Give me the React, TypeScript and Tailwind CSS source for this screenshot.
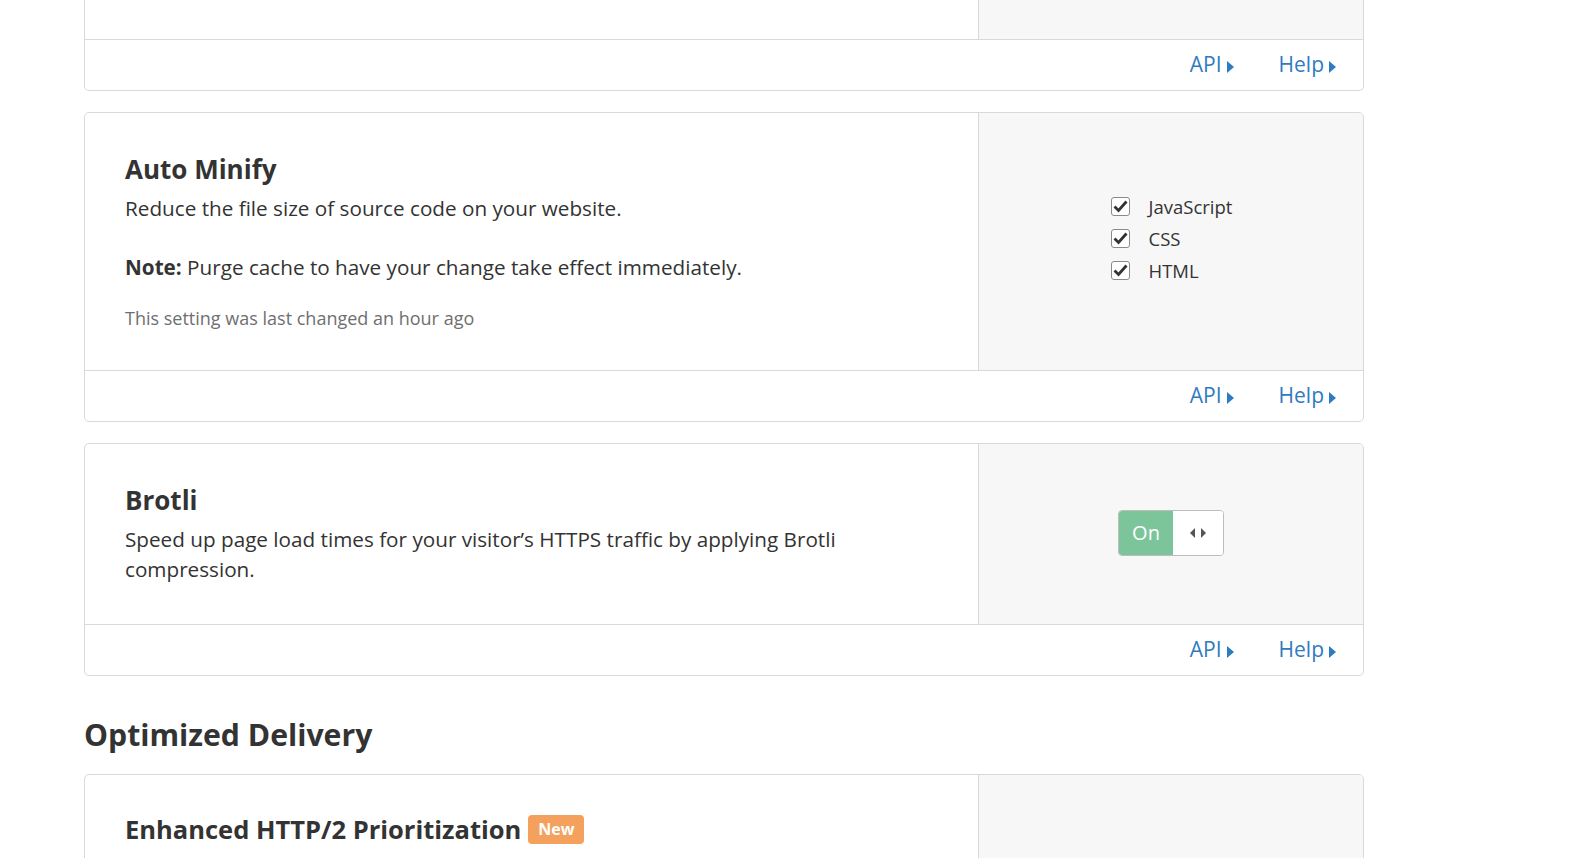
import { ReactNode } from "react";

const Caret = () => (
    <svg width="7" height="12" viewBox="0 0 7 12" className="ml-[5px] mt-[3px]">
        <path d="M0 0 L7 6 L0 12 Z" fill="#2f7bbf" />
    </svg>
)

const CardFooter = () => (
    <div className="flex h-[51px] items-center justify-end gap-[45px] border-t border-[#d9d9d9] pr-[27px] text-[21px] text-[#2f7bbf]">
        <a href="#" className="flex items-center">API<Caret /></a>
        <a href="#" className="flex items-center">Help<Caret /></a>
    </div>
)

const Card = ({ left, right, footer = true, className = "" }: { left: ReactNode; right: ReactNode; footer?: boolean; className?: string }) => (
    <div className={`overflow-hidden rounded-[5px] border border-[#d9d9d9] bg-white ${className}`}>
        <div className="flex">
            <div className="flex-1 px-[40px] py-[40px]">{left}</div>
            <div className="flex w-[385px] shrink-0 items-center justify-center border-l border-[#d9d9d9] bg-[#f7f7f7]">
                {right}
            </div>
        </div>
        {footer && <CardFooter />}
    </div>
)

const CheckBox = () => (
    <span className="flex h-[19px] w-[19px] items-center justify-center rounded-[3px] border border-[#8a8a8a] bg-white">
        <svg width="15" height="13" viewBox="0 0 15 13">
            <path d="M1.5 6.5 L5.5 10.5 L13.5 1.5" fill="none" stroke="#333" strokeWidth="2.8" strokeLinejoin="miter" />
        </svg>
    </span>
)

const Toggle = () => (
    <div className="-mt-[3px] flex h-[46px] w-[106px] overflow-hidden rounded-[4px] border border-[#bdbdbd]">
        <div className="flex w-[54px] items-center justify-center bg-[#7cc59a] text-[20px] text-white">On</div>
        <div className="flex flex-1 items-center justify-center bg-white">
            <svg width="16" height="10" viewBox="0 0 16 10">
                <path d="M5 0 L0 5 L5 10 Z" fill="#555" />
                <path d="M11 0 L16 5 L11 10 Z" fill="#555" />
            </svg>
        </div>
    </div>
)

const App = () => {
    const minify = ["JavaScript", "CSS", "HTML"]

    return (
        <div className="min-h-[858px] overflow-hidden bg-white font-['Open_Sans',sans-serif] text-[#333]">
            <div className="ml-[84px] w-[1280px]">
                {/* card scrolled past the top */}
                <div className="overflow-hidden rounded-b-[5px] border border-t-0 border-[#d9d9d9] bg-white">
                    <div className="flex h-[39px]">
                        <div className="flex-1" />
                        <div className="w-[385px] border-l border-[#d9d9d9] bg-[#f7f7f7]" />
                    </div>
                    <CardFooter />
                </div>

                <Card
                    className="mt-[21px]"
                    left={
                        <div className="-mb-[2px]">
                            <h3 className="text-[26px] font-bold leading-[32px]">Auto Minify</h3>
                            <p className="mt-[8px] text-[20.7px] leading-[30px]">Reduce the file size of source code on your website.</p>
                            <p className="mt-[29px] text-[20.7px] leading-[30px]"><strong className="font-bold">Note:</strong> Purge cache to have your change take effect immediately.</p>
                            <p className="mt-[23px] text-[18px] leading-[27px] text-[#6f6f6f]">This setting was last changed an hour ago</p>
                        </div>
                    }
                    right={
                        <div className="-mt-[6px] flex flex-col gap-[13px] pl-[1px]">
                            {minify.map((item) => (
                                <label key={item} className="flex items-center gap-[19px] text-[18.5px] leading-[19px]">
                                    <CheckBox />
                                    {item}
                                </label>
                            ))}
                        </div>
                    }
                />

                <Card
                    className="mt-[21px]"
                    left={
                        <div>
                            <h3 className="text-[26px] font-bold leading-[32px]">Brotli</h3>
                            <p className="mt-[8px] max-w-[760px] text-[20.7px] leading-[30px]">Speed up page load times for your visitor’s HTTPS traffic by applying Brotli compression.</p>
                        </div>
                    }
                    right={<Toggle />}
                />

                <h2 className="mt-[39px] text-[30.2px] font-bold leading-[40px]">Optimized Delivery</h2>

                <Card
                    className="mt-[19px]"
                    footer={false}
                    left={
                        <div className="h-[200px]">
                            <h3 className="-mt-[2px] flex items-center text-[25.5px] font-bold leading-[32px]">
                                Enhanced HTTP/2 Prioritization
                                <span className="ml-[7px] flex h-[29px] items-center rounded-[4px] bg-[#f4a15d] px-[10px] text-[16px] font-bold text-white">New</span>
                            </h3>
                        </div>
                    }
                    right={<div />}
                />
            </div>
        </div>
    )
}

export default App
